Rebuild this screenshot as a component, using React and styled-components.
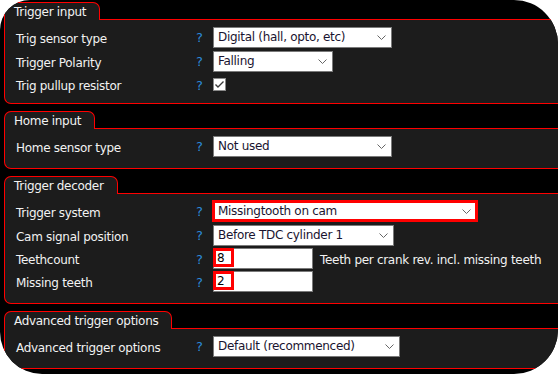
import React from 'react';
import styled, { createGlobalStyle } from 'styled-components';

////////////////////////////////////////////////////////////////////////////////

const GlobalStyle = createGlobalStyle`
  html, body {
    margin: 0;
    padding: 0;
    background: #fff;
  }
  * {
    box-sizing: border-box;
  }
`;

const RED = '#ff0000';
const PANEL = '#1c1c1c';

const Frame = styled.div`
  width: 558px;
  height: 374px;
  background: #000;
  border-radius: 30px 44px 44px 42px;
  overflow: hidden;
  padding-top: 2px;
  display: flex;
  flex-direction: column;
  gap: 7px;
  font-family: 'DejaVu Sans', Verdana, sans-serif;
  font-size: 12px;
  letter-spacing: -0.3px;
  color: #f2f2f2;
`;

const Section = styled.section`
  display: flex;
  flex-direction: column;
`;

const Tab = styled.div`
  align-self: flex-start;
  position: relative;
  z-index: 1;
  margin: 0 0 -1px 4px;
  height: 18px;
  padding: 1px 13px 0 9px;
  display: flex;
  align-items: center;
  background: ${PANEL};
  border: 1px solid ${RED};
  border-bottom: none;
  border-radius: 7px 7px 0 0;
  white-space: nowrap;
`;

const Panel = styled.div`
  margin: 0 -20px 0 4px;
  padding: 5px 0 ${p => p.pb}px 11px;
  background: ${PANEL};
  border: 1px solid ${RED};
  border-right: none;
  border-radius: 0 0 0 7px;
`;

////////////////////////////////////////////////////////////////////////////////

const Row = styled.div`
  display: grid;
  grid-template-columns: 180px 17px auto;
  align-items: center;
  height: ${p => p.h || 24}px;
  padding-top: ${p => p.pt || 0}px;
`;

const Label = styled.span`
  padding-top: 3px;
  white-space: nowrap;
`;

const Help = styled.span`
  padding-top: 1px;
  color: #2b8ad8;
  font-size: 13px;
`;

const Controls = styled.div`
  display: flex;
  align-items: center;
`;

const SelectBox = styled.div`
  width: ${p => p.w}px;
  height: ${p => (p.invalid ? 22 : 21)}px;
  margin-left: ${p => (p.invalid ? -1 : 0)}px;
  padding: 0 ${p => (p.invalid ? 4 : 5)}px 0 ${p => (p.invalid ? 3 : 4)}px;
  display: flex;
  align-items: center;
  justify-content: space-between;
  background: #fff;
  border: ${p => (p.invalid ? `3px solid ${RED}` : '1px solid #7a7a7a')};
  color: #1a1430;
  white-space: nowrap;
  svg {
    flex: none;
  }
`;

const Select = ({ value, ...props }) => (
  <SelectBox {...props}>
    <span>{value}</span>
    <svg width="9" height="5" viewBox="0 0 9 5">
      <polyline points="0.5,0.5 4.5,4.5 8.5,0.5" fill="none" stroke="#666" strokeWidth="1" />
    </svg>
  </SelectBox>
);

const CheckBox = styled.div`
  width: 13px;
  height: 13px;
  background: #fff;
  border: 1px solid #8a8a8a;
  display: flex;
  align-items: center;
  justify-content: center;
`;

const Check = () => (
  <CheckBox>
    <svg width="11" height="11" viewBox="0 0 11 11">
      <polyline points="1.5,5.5 4,8 9.5,2.5" fill="none" stroke="#3a3a3a" strokeWidth="1.4" />
    </svg>
  </CheckBox>
);

const InputBox = styled.div`
  width: 100px;
  height: 21px;
  background: #fff;
  border: 1px solid #7a7a7a;
  display: flex;
  align-items: flex-start;
`;

const ValueBox = styled.div`
  width: 21px;
  height: 19px;
  margin: -1px 0 0 -1px;
  padding-left: 1px;
  border: 3px solid ${RED};
  color: #000;
  display: flex;
  align-items: center;
`;

const NumberInput = ({ value }) => (
  <InputBox>
    <ValueBox>{value}</ValueBox>
  </InputBox>
);

const Hint = styled.span`
  margin-left: 7px;
  padding-top: 2px;
  white-space: nowrap;
`;

////////////////////////////////////////////////////////////////////////////////

const App = () => (
  <>
    <GlobalStyle />
    <Frame>
      <Section>
        <Tab>Trigger input</Tab>
        <Panel pb={10}>
          <Row>
            <Label>Trig sensor type</Label>
            <Help>?</Help>
            <Select w={179} value="Digital (hall, opto, etc)" />
          </Row>
          <Row>
            <Label>Trigger Polarity</Label>
            <Help>?</Help>
            <Select w={120} value="Falling" />
          </Row>
          <Row h={20} pt={3}>
            <Label>Trig pullup resistor</Label>
            <Help>?</Help>
            <Check />
          </Row>
        </Panel>
      </Section>

      <Section>
        <Tab>Home input</Tab>
        <Panel pb={10}>
          <Row>
            <Label>Home sensor type</Label>
            <Help>?</Help>
            <Select w={179} value="Not used" />
          </Row>
        </Panel>
      </Section>

      <Section>
        <Tab>Trigger decoder</Tab>
        <Panel pb={10}>
          <Row>
            <Label>Trigger system</Label>
            <Help>?</Help>
            <Select w={266} invalid value="Missingtooth on cam" />
          </Row>
          <Row>
            <Label>Cam signal position</Label>
            <Help>?</Help>
            <Select w={181} value="Before TDC cylinder 1" />
          </Row>
          <Row h={23}>
            <Label>Teethcount</Label>
            <Help>?</Help>
            <Controls>
              <NumberInput value="8" />
              <Hint>Teeth per crank rev. incl. missing teeth</Hint>
            </Controls>
          </Row>
          <Row h={23}>
            <Label>Missing teeth</Label>
            <Help>?</Help>
            <NumberInput value="2" />
          </Row>
        </Panel>
      </Section>

      <Section>
        <Tab>Advanced trigger options</Tab>
        <Panel pb={10}>
          <Row>
            <Label>Advanced trigger options</Label>
            <Help>?</Help>
            <Select w={187} value="Default (recommenced)" />
          </Row>
        </Panel>
      </Section>
    </Frame>
  </>
);

export default App;
